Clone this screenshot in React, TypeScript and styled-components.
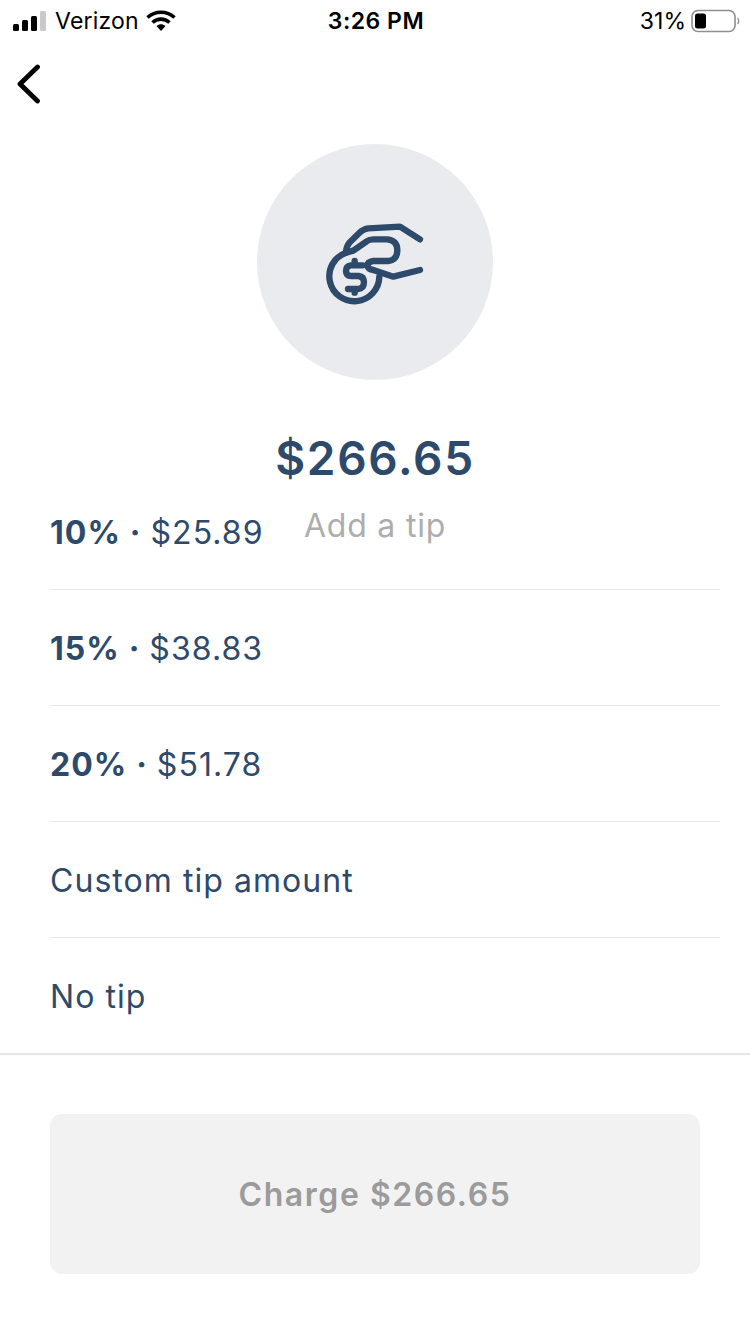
import React from "react";
import styled, { createGlobalStyle } from "styled-components";

const navy = "#2e4a6b";

const GlobalStyle = createGlobalStyle`
  html, body {
    margin: 0;
    padding: 0;
    background: #ffffff;
    font-family: Inter, "Liberation Sans", sans-serif;
  }
`;

const Page = styled.div`
  width: 750px;
  height: 1334px;
  overflow: hidden;
  background: #ffffff;
`;

const StatusBar = styled.div`
  height: 42px;
  display: grid;
  grid-template-columns: 1fr auto 1fr;
  align-items: center;
  padding: 0 9px 0 13px;
  color: #000000;
  font-size: 23px;
`;

const StatusLeft = styled.div`
  display: flex;
  align-items: center;
  gap: 7px;
  letter-spacing: 0.2px;
`;

const StatusRight = styled.div`
  display: flex;
  align-items: center;
  justify-content: flex-end;
  gap: 5px;
`;

const Time = styled.div`
  font-weight: 600;
  letter-spacing: 0.5px;
  transform: translateX(-1px);
`;

const NavBar = styled.div`
  height: 102px;
  padding: 22px 0 0 16px;
  box-sizing: border-box;
`;

const Hero = styled.div`
  height: 330px;
  display: flex;
  flex-direction: column;
  align-items: center;
`;

const IconCircle = styled.div`
  width: 236px;
  height: 236px;
  flex: none;
  border-radius: 50%;
  background: #e9ebef;
  display: flex;
  align-items: center;
  justify-content: center;
`;

const HandIconSvg = styled.svg`
  margin-top: 6px;
`;

const Amount = styled.div`
  margin-top: 48px;
  font-size: 46px;
  line-height: 60px;
  font-weight: 600;
  letter-spacing: 1.7px;
  color: ${navy};
`;

const TipLabel = styled.div`
  margin-top: 18px;
  font-size: 32px;
  line-height: 40px;
  letter-spacing: 0.8px;
  color: #adadad;
`;

const TipList = styled.div`
  padding: 0 30px 0 50px;
`;

const TipRow = styled.div`
  height: 116px;
  box-sizing: border-box;
  display: flex;
  align-items: center;
  padding: 2px 0 0;
  font-size: 32px;
  letter-spacing: 1.05px;
  color: ${navy};
  white-space: pre;
  border-bottom: 1px solid #e6e8ea;

  &:last-child {
    border-bottom: none;
    height: 115px;
  }
`;

const Percent = styled.span`
  font-weight: 700;
`;

const Dot = styled.span`
  font-weight: 700;
  letter-spacing: 1.2px;
`;

const Footer = styled.div`
  border-top: 2px solid #e1e6ea;
  padding: 59px 50px 0;
`;

const ChargeButton = styled.div`
  height: 160px;
  border-radius: 12px;
  background: #f2f2f2;
  display: flex;
  align-items: center;
  justify-content: center;
  font-size: 32px;
  font-weight: 600;
  letter-spacing: 1.55px;
  color: #9b9b9b;
`;

const SignalBars = () => (
  <svg width="35" height="20" viewBox="0 0 35 20">
    <rect x="0" y="13" width="6" height="7" rx="1.5" fill="#000" />
    <rect x="9" y="9" width="6" height="11" rx="1.5" fill="#000" />
    <rect x="18" y="5" width="6" height="15" rx="1.5" fill="#000" />
    <rect x="27" y="0" width="6" height="20" rx="1.5" fill="#c9c9c9" />
  </svg>
);

const WifiIcon = () => (
  <svg width="30" height="22" viewBox="0 0 30 22">
    <path d="M1.5 7.5 C9 0.5 21 0.5 28.5 7.5" fill="none" stroke="#000" strokeWidth="3.6" />
    <path d="M6.5 12.5 C11.5 8 18.5 8 23.5 12.5" fill="none" stroke="#000" strokeWidth="3.6" />
    <path d="M10.5 16 C13.5 13.6 16.5 13.6 19.5 16 L15 21 Z" fill="#000" />
  </svg>
);

const BatteryIcon = () => (
  <svg width="50" height="24" viewBox="0 0 50 24">
    <rect x="1" y="1.5" width="43" height="21" rx="6" fill="none" stroke="#8e8e8e" strokeWidth="1.6" />
    <rect x="4" y="4.5" width="11" height="15" rx="2.5" fill="#000" />
    <path d="M46.5 9 C48 10 48 14 46.5 15" fill="none" stroke="#8e8e8e" strokeWidth="1.4" />
  </svg>
);

const BackChevron = () => (
  <svg width="30" height="40" viewBox="0 0 30 40">
    <path d="M21.5 3 L4 20 L21.5 37" fill="none" stroke="#000" strokeWidth="4.8" strokeLinecap="round" strokeLinejoin="round" />
  </svg>
);

const HandCoinIcon = () => (
  <HandIconSvg width="130" height="110" viewBox="0 0 390 330" fill="none" stroke={navy} strokeWidth="19" strokeLinecap="round" strokeLinejoin="round">
    <path d="M330 88 L270 50 L175 55 Q160 57 150 67 L118 98 Q108 110 108 128" />
    <path d="M108 128 L130 122 L170 94 Q178 88 190 88 L232 88 Q262 92 262 120 Q262 150 235 153 L190 153 Q172 155 172 168 Q175 178 190 180 L250 200 L330 180" />
    <path d="M108 128 A75 75 0 1 0 208 200" />
    <path d="M158 166 L122 166 Q108 168 108 182 Q108 198 124 198 L146 198 Q162 200 162 216 Q162 236 144 237 L114 237" />
    <path d="M134 153 L134 164 M134 238 L134 248" />
  </HandIconSvg>
);

const tips = [
  { percent: "10%", amount: "$25.89" },
  { percent: "15%", amount: "$38.83" },
  { percent: "20%", amount: "$51.78" },
];

export default function App() {
  return (
    <Page>
      <GlobalStyle />
      <StatusBar>
        <StatusLeft>
          <SignalBars />
          <span>Verizon</span>
          <WifiIcon />
        </StatusLeft>
        <Time>3:26 PM</Time>
        <StatusRight>
          <span>31%</span>
          <BatteryIcon />
        </StatusRight>
      </StatusBar>
      <NavBar>
        <BackChevron />
      </NavBar>
      <Hero>
        <IconCircle>
          <HandCoinIcon />
        </IconCircle>
        <Amount>$266.65</Amount>
        <TipLabel>Add a tip</TipLabel>
      </Hero>
      <TipList>
        {tips.map((tip) => (
          <TipRow key={tip.percent}>
            <Percent>{tip.percent}</Percent>
            <Dot>{" · "}</Dot>
            {tip.amount}
          </TipRow>
        ))}
        <TipRow>Custom tip amount</TipRow>
        <TipRow>No tip</TipRow>
      </TipList>
      <Footer>
        <ChargeButton>Charge $266.65</ChargeButton>
      </Footer>
    </Page>
  );
}
